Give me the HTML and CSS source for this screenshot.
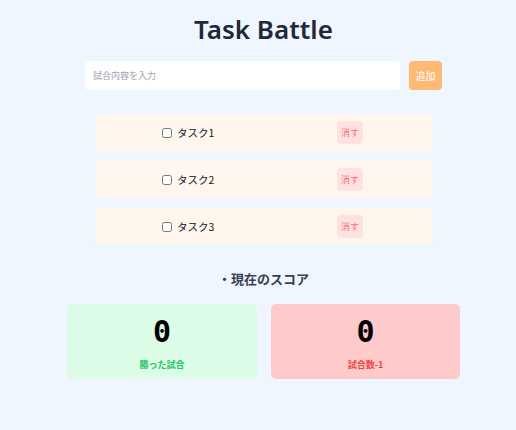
FILE: index.html
```html
<!DOCTYPE html>
<html lang="ja">
<head>
<meta charset="utf-8">
<title>Task Battle</title>
<link rel="stylesheet" href="styles.css">
</head>
<body>
<main class="page">
  <h1 class="title">Task Battle</h1>
  <div class="add-form">
    <input class="add-input" type="text" placeholder="試合内容を入力">
    <button class="add-btn">追加</button>
  </div>
  <ul class="tasks">
    <li class="task">
      <label class="task-label"><input type="checkbox" class="task-check"><span>タスク1</span></label>
      <button class="del-btn">消す</button>
    </li>
    <li class="task">
      <label class="task-label"><input type="checkbox" class="task-check"><span>タスク2</span></label>
      <button class="del-btn">消す</button>
    </li>
    <li class="task">
      <label class="task-label"><input type="checkbox" class="task-check"><span>タスク3</span></label>
      <button class="del-btn">消す</button>
    </li>
  </ul>
  <h2 class="score-heading">・現在のスコア</h2>
  <div class="scores">
    <div class="score-card win">
      <div class="score-num">0</div>
      <div class="score-label">勝った試合</div>
    </div>
    <div class="score-card lose">
      <div class="score-num">0</div>
      <div class="score-label">試合数-1</div>
    </div>
  </div>
</main>
</body>
</html>
```

FILE: styles.css
```css
* { box-sizing: border-box; }
html, body { margin: 0; padding: 0; }
body {
  background: #eff6ff;
  font-family: "Noto Sans", "Noto Sans CJK JP", sans-serif;
  color: #1f2937;
  width: 516px;
  height: 430px;
  overflow: hidden;
}
.page {
  padding: 11px 0 0 11px;
  display: flex;
  flex-direction: column;
  align-items: center;
}
.title {
  margin: 0;
  font-size: 26px;
  line-height: 36px;
  font-weight: 600;
  color: #1f2937;
}
.add-form {
  margin-top: 14px;
  display: flex;
  gap: 9px;
  width: 357px;
}
.add-input {
  flex: 1;
  height: 29px;
  border: none;
  border-radius: 4px;
  background: #ffffff;
  padding: 0 8px;
  font-family: "Noto Sans CJK JP", sans-serif;
  font-size: 9px;
  outline: none;
}
.add-input::placeholder { color: #9ca3af; }
.add-btn {
  width: 33px;
  height: 29px;
  border: none;
  border-radius: 4px;
  background: #fdba74;
  color: #ffffff;
  font-family: "Noto Sans CJK JP", sans-serif;
  font-size: 10px;
  padding: 0;
}
.tasks {
  list-style: none;
  margin: 24px 0 0;
  padding: 0;
  width: 338px;
  display: flex;
  flex-direction: column;
  gap: 10px;
}
.task {
  height: 37px;
  background: #fff7ed;
  border-radius: 4px;
  display: flex;
  align-items: center;
  justify-content: space-around;
  padding: 0 8px 0 6px;
}
.task-label {
  display: flex;
  align-items: center;
  gap: 5px;
  font-family: "Noto Sans CJK JP", sans-serif;
  font-size: 10.5px;
  font-weight: 400;
  color: #111827;
}
.task-check {
  margin: 0;
  width: 10px;
  height: 10px;
}
.del-btn {
  width: 26px;
  height: 23px;
  border: none;
  border-radius: 4px;
  background: #fee2e2;
  color: #f87171;
  font-family: "Noto Sans CJK JP", sans-serif;
  font-size: 9px;
  padding: 0;
}
.score-heading {
  margin: 24px 0 0;
  font-family: "Noto Sans CJK JP", sans-serif;
  font-size: 13px;
  line-height: 20px;
  font-weight: 700;
  color: #374151;
}
.scores {
  margin-top: 15px;
  display: grid;
  grid-template-columns: 190px 189px;
  gap: 14px;
}
.score-card {
  height: 75px;
  border-radius: 5px;
  display: flex;
  flex-direction: column;
  align-items: center;
  padding-top: 9px;
}
.score-card.win { background: #dcfce7; }
.score-card.lose { background: #fecaca; }
.score-num {
  font-family: "DejaVu Sans Mono", monospace;
  font-weight: 700;
  font-size: 30px;
  line-height: 38px;
  color: #000000;
}
.score-label {
  margin-top: 7px;
  font-family: "Noto Sans CJK JP", sans-serif;
  font-size: 9px;
  line-height: 14px;
  font-weight: 700;
}
.win .score-label { color: #22c55e; }
.lose .score-label { color: #ef4444; }
```
